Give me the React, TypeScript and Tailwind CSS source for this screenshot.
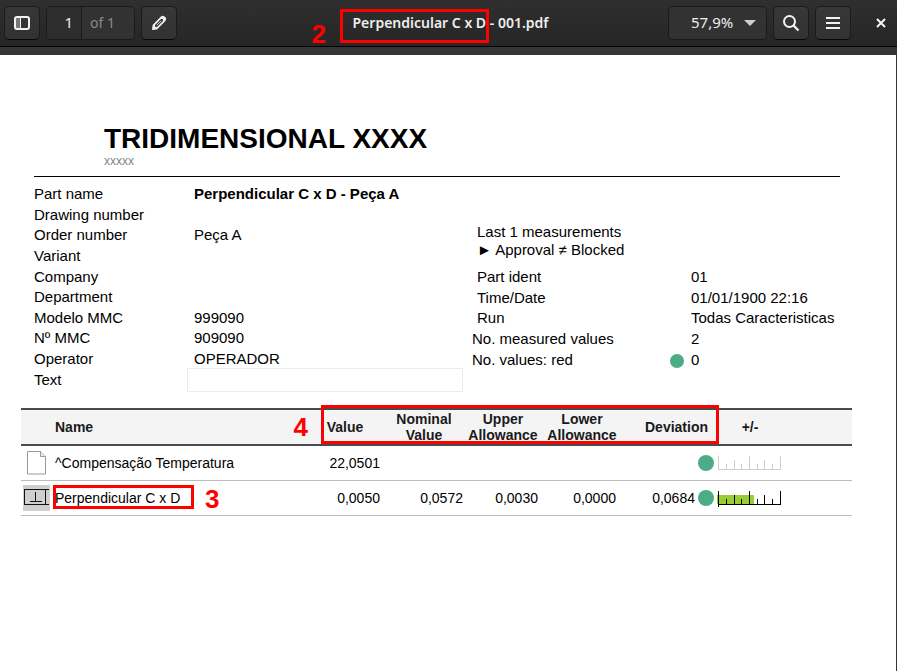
import React from "react";

const toolButton =
  "flex h-[34px] items-center justify-center rounded-[5px] border border-[#1b1b1b] border-b-[#070707] bg-linear-to-b from-[#373737] to-[#323232] text-[#eeeeec]";

function SidebarIcon() {
  return (
    <svg width="18" height="18" viewBox="0 0 18 18" aria-hidden="true">
      <rect x="3" y="4" width="4" height="10" fill="#777" />
      <rect x="2" y="3" width="14" height="12" rx="2" fill="none" stroke="#f3f3f1" strokeWidth="2" />
      <path d="M7.5 4v10" stroke="#f3f3f1" strokeWidth="1" />
    </svg>
  );
}

function PencilIcon() {
  return (
    <svg width="18" height="18" viewBox="0 0 18 18" aria-hidden="true">
      <path
        d="M2 16l.6-5L11 2.600a2.600 2.600 0 0 1 3.400-.2l1.200 1.200a2.600 2.600 0 0 1-.2 3.400L7 15.400z"
        fill="#f3f3f1"
      />
      <path d="M6.300 11.700l5.400-5.400" stroke="#343434" strokeWidth="2.800" strokeLinecap="round" />
      <path d="M7 11l4-4" stroke="#d0d0ce" strokeWidth="1" strokeLinecap="round" />
    </svg>
  );
}

function SearchIcon() {
  return (
    <svg width="18" height="18" viewBox="0 0 18 18" fill="none" stroke="#f3f3f1" strokeWidth="2" aria-hidden="true">
      <circle cx="7.5" cy="7.500" r="5.500" />
      <path d="M11.500 11.500l5 5" strokeWidth="2.300" />
    </svg>
  );
}

function MenuIcon() {
  return (
    <svg width="16" height="14" viewBox="0 0 16 14" fill="#f3f3f1" aria-hidden="true">
      <path d="M1 1h14v2H1zM1 6h14v2H1zM1 11h14v2H1z" />
    </svg>
  );
}

function Toolbar() {
  return (
    <header className="flex h-[47px] items-start border-b border-black bg-linear-to-b from-[#2f2f2f] to-[#262626] pt-[6px] pl-1 font-['Noto_Sans',sans-serif] text-[15px] text-[#eeeeec]">
      <div className="flex flex-1 gap-[6px]">
        <button type="button" aria-label="Side pane" className={`${toolButton} w-9`}>
          <SidebarIcon />
        </button>
        <div className="flex h-[34px] w-[89px] overflow-hidden rounded-[5px] border border-[#1b1b1b] bg-[#323232]">
          <input
            id="page"
            aria-label="Page"
            defaultValue="1"
            className="w-[35px] border-r border-[#1b1b1b] bg-[#2d2d2d] pr-2 pb-[2px] text-right outline-none"
          />
          <label htmlFor="page" className="flex items-center pl-2 text-sm text-[#8b8b89]">
            of 1
          </label>
        </div>
        <button type="button" aria-label="Annotate" className={`${toolButton} w-9`}>
          <PencilIcon />
        </button>
      </div>

      <h1 className="relative text-[14px] leading-[34px] font-semibold whitespace-nowrap">
        Perpendicular C x D - 001.pdf
        <span className="absolute top-[3px] -left-[13px] h-[34px] w-[149px] border-3 border-[#fe0000]" />
        <Marker className="top-[14px] -left-[41px]">2</Marker>
      </h1>

      <div className="flex flex-1 justify-end gap-[6px]">
        <div className="relative">
          <select
            aria-label="Zoom"
            className="h-[34px] w-[99px] appearance-none rounded-[5px] border border-[#1b1b1b] bg-[#323232] pb-[2px] pl-[22px]"
          >
            <option>57,9%</option>
          </select>
          <svg width="12" height="6" viewBox="0 0 12 6" className="pointer-events-none absolute top-[14px] right-[11px]" aria-hidden="true">
            <path d="M0 0h12L6 6z" fill="#cfcfcd" />
          </svg>
        </div>
        <button type="button" aria-label="Find" className={`${toolButton} w-9`}>
          <SearchIcon />
        </button>
        <button type="button" aria-label="Menu" className={`${toolButton} w-9`}>
          <MenuIcon />
        </button>
        <button type="button" aria-label="Close" className="ml-2 flex h-[34px] w-8 items-center justify-center">
          <svg width="10" height="10" viewBox="0 0 10 10" stroke="#f3f3f1" strokeWidth="2" aria-hidden="true">
            <path d="M1 1l8 8M9 1l-8 8" />
          </svg>
        </button>
      </div>
    </header>
  );
}

function Marker({ className, children }: { className: string; children: React.ReactNode }) {
  return (
    <span
      className={`absolute font-['Liberation_Sans',Arial,sans-serif] text-[26px] leading-7 font-bold text-[#fe0000] ${className}`}
    >
      {children}
    </span>
  );
}

const partFields = [
  ["Part name", "Perpendicular C x D - Peça A"],
  ["Drawing number", ""],
  ["Order number", "Peça A"],
  ["Variant", ""],
  ["Company", ""],
  ["Department", ""],
  ["Modelo MMC", "999090"],
  ["Nº MMC", "909090"],
  ["Operator", "OPERADOR"],
];

const runFields = [
  ["Part ident", "01"],
  ["Time/Date", "01/01/1900 22:16"],
  ["Run", "Todas Caracteristicas"],
  ["No. measured values", "2"],
  ["No. values: red", "0"],
];

function PartInfo() {
  return (
    <section className="flex h-[206px] text-[15px] leading-5 whitespace-nowrap">
      <div className="grid w-[438px] shrink-0 grid-cols-[160px_1fr] grid-rows-10 items-center">
        {partFields.map(([label, value], i) => (
          <React.Fragment key={label}>
            <span>{label}</span>
            <span className={i === 0 ? "font-bold" : ""}>{value}</span>
          </React.Fragment>
        ))}
        <label htmlFor="text">Text</label>
        <input id="text" className="-my-1 -ml-[7px] h-6 w-[276px] border border-[#ececec] px-1 outline-none" />
      </div>
      <div className="flex flex-1 flex-col">
        <div className="flex h-[83px] flex-col justify-end pb-2 pl-[5px] leading-[18px]">
          <p>Last 1 measurements</p>
          <p>► Approval ≠ Blocked</p>
        </div>
        <div className="grid h-[103px] grid-cols-[198px_21px_1fr] grid-rows-5 items-center">
          {runFields.map(([label, value], i) => (
            <React.Fragment key={label}>
              <span className={i < 3 ? "pl-[5px]" : ""}>{label}</span>
              <span>{i === 4 && <span className="mt-[3px] block size-[14px] rounded-full bg-[#4aad86]" />}</span>
              <span>{value}</span>
            </React.Fragment>
          ))}
        </div>
      </div>
    </section>
  );
}

function Scale({ active }: { active: boolean }) {
  return (
    <svg width="65" height="18" viewBox="-1 0 65 18" shapeRendering="crispEdges" className="-ml-px block" aria-hidden="true">
      {active && <rect x="-1" y="6" width="37" height="9" fill="#9acd32" />}
      <path
        d={`M0 15.500H63M.5 2V${active ? 18 : 16}M8.500 9.500V15M16.500 5.500V15M23.500 9.500V15M31.500 2V15M39.500 9.500V15M46.500 5.500V15M54.500 9.500V15M62.500 2V16`}
        stroke={active ? "#000" : "#cfcfcf"}
        strokeWidth="1"
        fill="none"
      />
    </svg>
  );
}

function DocumentIcon() {
  return (
    <svg width="20" height="24" viewBox="0 0 20 24" fill="#fff" stroke="#999" className="ml-[6px]" aria-hidden="true">
      <path d="M.5.5h13l5 5v17.500h-18z" />
      <path d="M13.500.5v5h5" fill="#eee" />
    </svg>
  );
}

function PerpendicularityIcon() {
  return (
    <svg width="27" height="26" viewBox="0 0 27 26" fill="none" stroke="#111" className="ml-[2px]" aria-hidden="true">
      <rect width="27" height="26" fill="#cfcfcf" stroke="none" />
      <path d="M26 4.500H1.500v15H26M22.500 4v16M7 16.500h12M12.500 7v10" shapeRendering="crispEdges" />
    </svg>
  );
}

const rows = [
  { name: "^Compensação Temperatura", value: "22,0501", nominal: "", upper: "", lower: "", deviation: "", active: false },
  { name: "Perpendicular C x D", value: "0,0050", nominal: "0,0572", upper: "0,0030", lower: "0,0000", deviation: "0,0684", active: true },
];

function Measurements() {
  return (
    <section className="relative mt-[18px] mr-11 ml-[21px]">
      <table className="w-full table-fixed text-right text-sm leading-4">
        <colgroup>
          <col className="w-[34px]" />
          <col />
          <col className="w-[70px]" />
          <col className="w-[88px]" />
          <col className="w-[70px]" />
          <col className="w-[88px]" />
          <col className="w-[72px]" />
          <col className="w-5" />
          <col className="w-16" />
          <col className="w-[70px]" />
        </colgroup>
        <thead>
          <tr className="h-9 border-y-2 border-[#4a4a4a] bg-[#f4f4f4] text-center text-[#1a1a1a]">
            <th />
            <th className="text-left">Name</th>
            <th>Value</th>
            <th>Nominal<br />Value</th>
            <th>Upper<br />Allowance</th>
            <th>Lower<br />Allowance</th>
            <th colSpan={2} className="pr-[10px] text-right">Deviation</th>
            <th>+/-</th>
            <th />
          </tr>
        </thead>
        <tbody>
          {rows.map((row) => (
            <tr key={row.name} className="h-[35px] border-b border-[#bdbdbd]">
              <td>{row.active ? <PerpendicularityIcon /> : <DocumentIcon />}</td>
              <td className="text-left">{row.name}</td>
              <td>{row.value}</td>
              <td className="pr-[5px]">{row.nominal}</td>
              <td>{row.upper}</td>
              <td className="pr-[10px]">{row.lower}</td>
              <td className="pr-[3px]">{row.deviation}</td>
              <td>
                <span className="block size-4 rounded-full bg-[#4aad86]" />
              </td>
              <td>
                <Scale active={row.active} />
              </td>
              <td />
            </tr>
          ))}
        </tbody>
      </table>
      <span className="absolute -top-[3px] right-[133px] h-[39px] w-[398px] border-3 border-[#fe0000]" />
      <Marker className="top-[5px] right-[544px]">4</Marker>
      <span className="absolute top-[77px] left-8 h-6 w-[141px] border-3 border-[#fe0000]" />
      <Marker className="top-[77px] left-[184px]">3</Marker>
    </section>
  );
}

export default function App() {
  return (
    <div className="flex min-h-screen flex-col bg-[#353535]">
      <Toolbar />
      <main className="mt-2 mr-px flex-1 bg-white pt-[68px] font-['Liberation_Sans',Arial,sans-serif] text-black">
        <div className="mr-14 ml-[34px]">
          <div className="border-b border-black pb-2 pl-[70px]">
            <h2 className="text-[28px] leading-8 font-bold">TRIDIMENSIONAL XXXX</h2>
            <p className="text-xs leading-[13px] text-[#858585]">xxxxx</p>
          </div>
          <div className="pt-[7px]">
            <PartInfo />
          </div>
        </div>
        <Measurements />
      </main>
    </div>
  );
}
